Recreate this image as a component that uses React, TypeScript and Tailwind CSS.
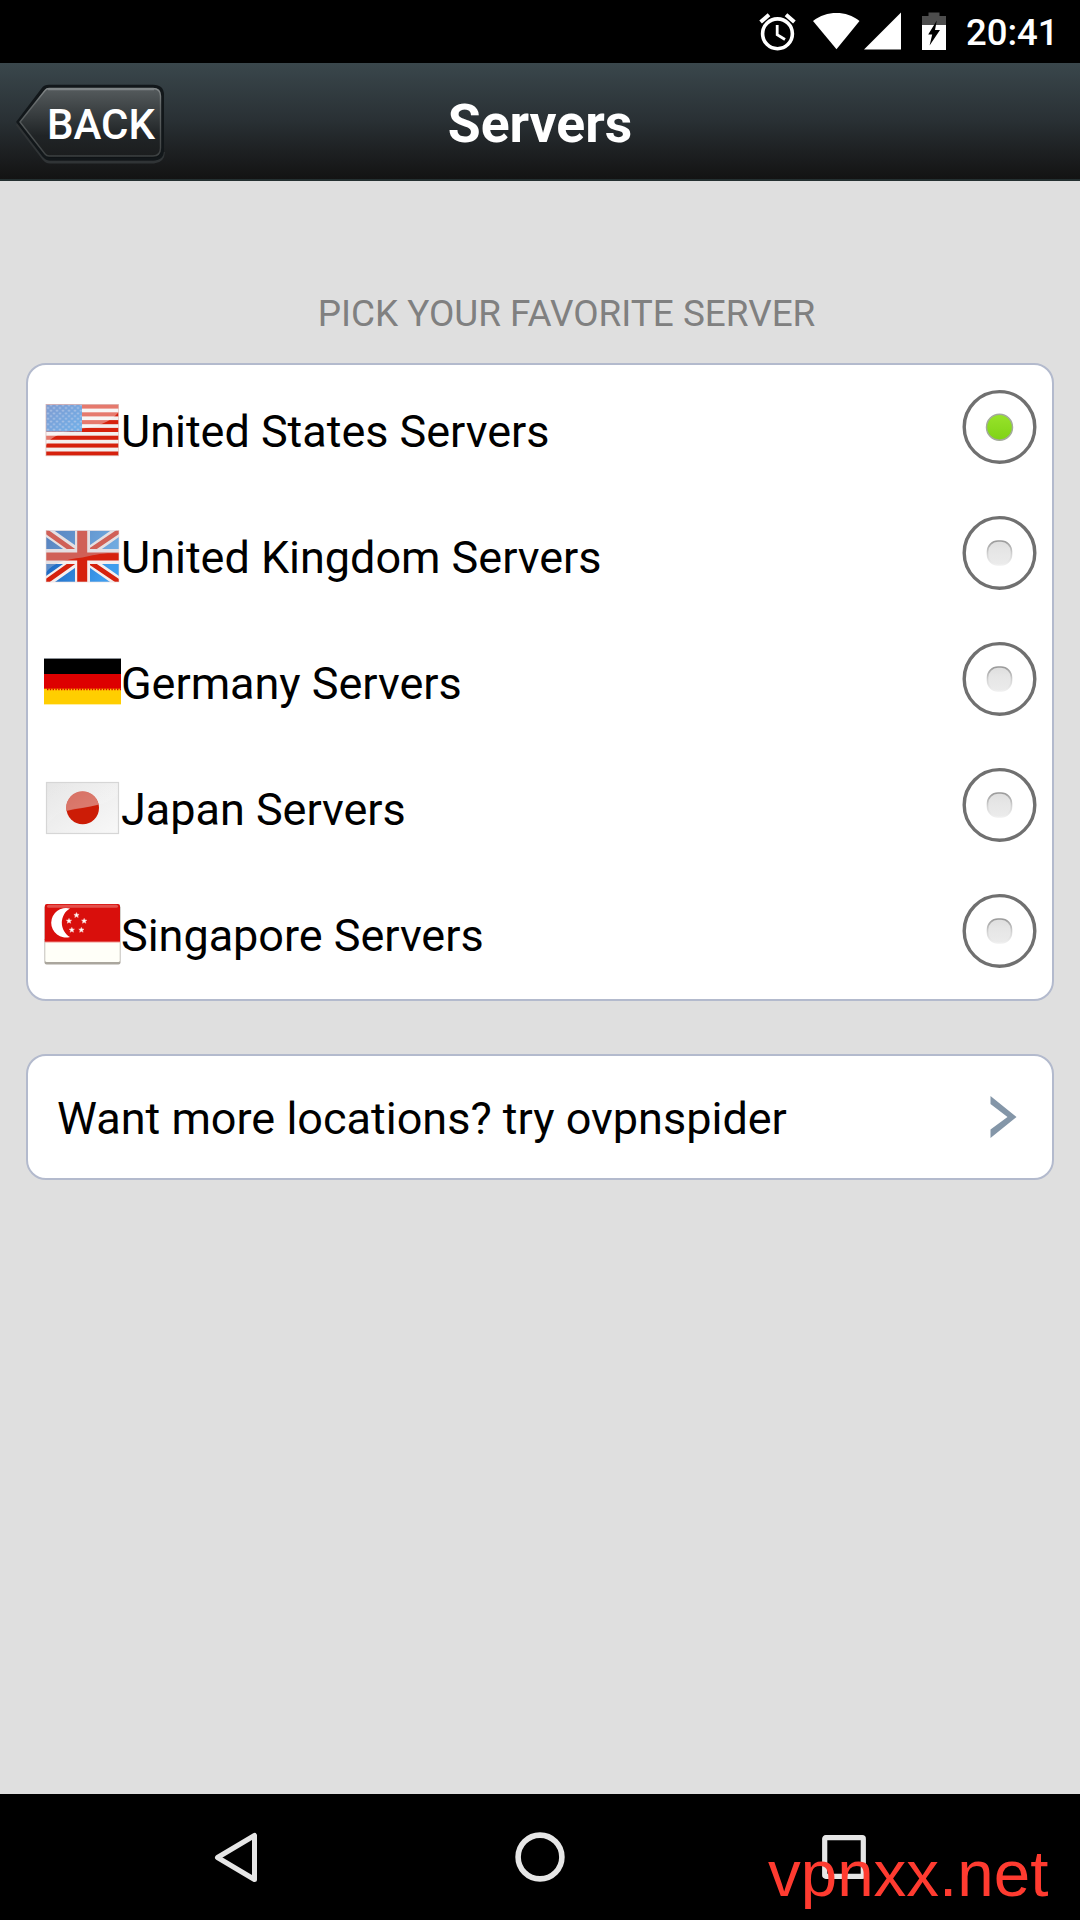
import { useState } from 'react';

type RadioProps = {
  checked?: boolean;
};

const UsFlag = () => (
  <svg className="h-[63px] w-[77px] shrink-0" viewBox="0.5 -0.5 77 63">
    <defs>
      <pattern id="stars" width="6" height="5.4" patternUnits="userSpaceOnUse">
        <circle cx="1.5" cy="1.4" r="1" fill="#b4c8e8" />
        <circle cx="4.5" cy="4.1" r="1" fill="#b4c8e8" />
      </pattern>
      <linearGradient id="canton" x1="0" y1="0" x2="1" y2="1">
        <stop offset="0" stopColor="#7f9bd0" />
        <stop offset="1" stopColor="#6fb0ea" />
      </linearGradient>
    </defs>
    <rect x="2" y="5.5" width="73.5" height="52" fill="#f3efee" />
    {[6, 13.8, 21.6, 29.4, 37.2, 45, 53].map((y) => (
      <rect key={y} x="2.5" y={y} width="72.5" height="4.1" fill="#d6210d" />
    ))}
    <path d="M2.5 6 H75 V14 C66 24 54 28 39 30 C22 33 12 36 5 43 L2.5 47 Z" fill="#fff" fillOpacity="0.4" />
    <rect x="2.5" y="6" width="36" height="27" fill="url(#canton)" />
    <rect x="2.5" y="6" width="36" height="27" fill="url(#stars)" />
    <rect x="2.5" y="6" width="72.5" height="51.2" fill="none" stroke="#dcb8b4" strokeOpacity="0.6" />
  </svg>
);

const UkFlag = () => (
  <svg className="h-[63px] w-[77px] shrink-0" viewBox="0.5 -0.5 77 63">
    <defs>
      <linearGradient id="ukblue" x1="0" y1="0" x2="1" y2="0.4">
        <stop offset="0" stopColor="#1458b4" />
        <stop offset="1" stopColor="#3e9dee" />
      </linearGradient>
      <clipPath id="ukclip">
        <rect x="2.5" y="6" width="73" height="51.5" />
      </clipPath>
    </defs>
    <g clipPath="url(#ukclip)">
      <rect x="2.5" y="6" width="73" height="51.5" fill="url(#ukblue)" />
      <path d="M2 6 L76 58 M76 6 L2 58" stroke="#f5eeee" strokeWidth="10" />
      <path d="M0 5 L38 32 M78 5 L38 32 M0 59 L38 32 M78 59 L38 32" stroke="#d6210d" strokeWidth="4.8" />
      <path d="M39 6 V58 M2 32 H76" stroke="#f5eeee" strokeWidth="15" />
      <path d="M38.7 6 V58" stroke="#d6210d" strokeWidth="10" />
      <path d="M2 32 H76" stroke="#d6210d" strokeWidth="8" />
      <path d="M2.5 6 H75.5 V29 C58 28 50 31 39 33 C22 35 10 38 2.5 48 Z" fill="#c8c8d0" fillOpacity="0.38" />
    </g>
    <rect x="2.5" y="6" width="73" height="51.5" fill="none" stroke="#e8dcdc" strokeOpacity="0.6" />
  </svg>
);

const GermanyFlag = () => (
  <svg className="h-[63px] w-[77px] shrink-0" viewBox="0 0 77 63">
    <rect y="8.5" width="77" height="16" fill="#000" />
    <rect y="8" width="77" height="1" fill="#8b9096" />
    <rect y="24" width="77" height="15" fill="#dd0000" />
    <rect y="38.7" width="77" height="15.5" fill="#ffce00" />
    <path d="M3 39.4 H77" stroke="#dd0000" strokeWidth="1.6" strokeDasharray="1.4 1.4" />
    <rect y="54" width="77" height="1" fill="#ffeea0" />
  </svg>
);

const JapanFlag = () => (
  <svg className="h-[63px] w-[77px] shrink-0" viewBox="0 -0.5 77 63">
    <defs>
      <linearGradient id="jpbg" x1="0" y1="0" x2="1" y2="1">
        <stop offset="0" stopColor="#e6e6e6" />
        <stop offset="1" stopColor="#f8f8f8" />
      </linearGradient>
      <linearGradient id="jpgloss" x1="0" y1="0" x2="1" y2="1">
        <stop offset="0" stopColor="#fff" stopOpacity="0" />
        <stop offset="1" stopColor="#fff" stopOpacity="0.5" />
      </linearGradient>
    </defs>
    <rect x="2.5" y="6" width="72" height="51" fill="url(#jpbg)" stroke="#d6d6d6" strokeWidth="1.2" />
    <circle cx="38.7" cy="31.5" r="16.3" fill="#cc1c06" />
    <path d="M22.4 34.5 A16.3 16.3 0 1 1 54.7 28 C44 31 33 32 22.4 34.5 Z" fill="#d66a5c" />
    <path d="M3 6.5 H74 V18 C64 28 52 29 39 31 C22 33 10 36 3 50 Z" fill="url(#jpgloss)" fillOpacity="0.4" />
  </svg>
);

const SingaporeFlag = () => (
  <svg className="h-[63px] w-[77px] shrink-0" viewBox="0 0 77 63">
    <rect x="0.5" y="3.5" width="76" height="59" rx="2" fill="#aaa69d" />
    <rect x="1.2" y="3" width="74.6" height="57" rx="1.5" fill="#fffff8" />
    <rect x="0.8" y="2" width="75.2" height="38" rx="2" fill="#d90f0c" />
    <rect x="0.8" y="37" width="75.2" height="3" fill="#d90f0c" />
    <rect x="0.8" y="39.6" width="75.2" height="1" fill="#f3a6a0" />
    <rect x="3" y="2.8" width="71" height="3" rx="1.5" fill="#e4514c" />
    <path d="M26 6.5 A14.8 14.8 0 1 0 26 35 A16.5 16.5 0 0 1 26 6.5 Z" fill="#fff" />
    {['32.5,13.2', '25,19', '40.2,19', '27.8,28', '37.4,28'].map((p) => (
      <g key={p} transform={`translate(${p})`}>
        <path
          d="M0 -2.6 L0.8 -0.9 L2.6 -0.8 L1.2 0.5 L1.7 2.2 L0 1.3 L-1.7 2.2 L-1.2 0.5 L-2.6 -0.8 L-0.8 -0.9 Z"
          fill="#fff"
          stroke="#f8c8c4"
          strokeWidth="0.6"
        />
      </g>
    ))}
  </svg>
);

const servers = [
  { code: 'us', name: 'United States Servers', flag: <UsFlag /> },
  { code: 'uk', name: 'United Kingdom Servers', flag: <UkFlag /> },
  { code: 'de', name: 'Germany Servers', flag: <GermanyFlag /> },
  { code: 'jp', name: 'Japan Servers', flag: <JapanFlag /> },
  { code: 'sg', name: 'Singapore Servers', flag: <SingaporeFlag /> },
];

const Radio = ({ checked = false }: RadioProps) => (
  <svg className="h-[75px] w-[75px] shrink-0" viewBox="0 0 75 75">
    <defs>
      <linearGradient id="radioOn" x1="0" y1="0" x2="0" y2="1">
        <stop offset="0" stopColor="#98e32b" />
        <stop offset="1" stopColor="#7fd316" />
      </linearGradient>
      <linearGradient id="radioOff" x1="0" y1="0" x2="0" y2="1">
        <stop offset="0" stopColor="#dedede" />
        <stop offset="0.4" stopColor="#e6e6e6" />
        <stop offset="1" stopColor="#ebebeb" />
      </linearGradient>
      <linearGradient id="radioOffRim" x1="0" y1="0" x2="0" y2="1">
        <stop offset="0" stopColor="#999" />
        <stop offset="0.6" stopColor="#d8d8d8" />
        <stop offset="1" stopColor="#f0f0f0" />
      </linearGradient>
    </defs>
    <circle cx="37.5" cy="37.9" r="35.3" fill="#fff" stroke="#707070" strokeWidth="3.4" />
    {checked ? (
      <circle cx="37.5" cy="38.2" r="13" fill="url(#radioOn)" stroke="#a3aa9c" strokeWidth="1.5" />
    ) : (
      <rect x="25.5" y="26" width="24" height="24" rx="10.5" fill="url(#radioOff)" stroke="url(#radioOffRim)" strokeWidth="1.6" />
    )}
  </svg>
);

const StatusBar = () => (
  <div className="flex h-[63px] items-start justify-end bg-black pr-[26px] text-white">
    <svg className="mt-3 h-[40px] w-[37px]" viewBox="0 0 37 40">
      <circle cx="18.5" cy="21.8" r="14.9" fill="none" stroke="#fff" strokeWidth="3.6" />
      <path d="M18.2 13 V22.8 L26 27.5" fill="none" stroke="#fff" strokeWidth="2.8" />
      <path d="M1.6 10 L10 2.8 M35.4 10 L27 2.8" stroke="#fff" strokeWidth="4" />
    </svg>
    <svg className="mt-3 ml-[17px] h-[38px] w-[47px]" viewBox="0 0 47 38">
      <path d="M0 9 C7 3.5 15 1 23.5 1 C32 1 39.5 3.5 46.5 9 L23.5 37.3 Z" fill="#fff" />
    </svg>
    <svg className="mt-3 ml-1 h-[38px] w-[37px]" viewBox="0 0 37 38">
      <path d="M0 37.5 H37 V0.5 Z" fill="#fff" />
    </svg>
    <svg className="mt-3 ml-[21px] h-[38px] w-[24px]" viewBox="0 0 24 38">
      <path d="M0 13 V4 H6.5 V0.5 H17.5 V4 H24 V13 Z" fill="#4d4d4d" />
      <path d="M0 13 H24 V38 H0 Z" fill="#fff" />
      <path d="M14.8 8.5 L6.2 22.5 H10.2 L7.6 33.5 L18 18 H13 Z" fill="#000" />
    </svg>
    <span className="ml-5 w-[88px] text-[36.5px] leading-[66px] font-medium whitespace-nowrap">20:41</span>
  </div>
);

const BackButton = () => (
  <button className="relative flex h-[86px] w-[152px] items-center pt-[7px] pl-[33px] text-left">
    <svg className="absolute top-px left-0 h-[86px] w-[152px]" viewBox="0 0 152 86">
      <defs>
        <linearGradient id="backFill" x1="0" y1="0" x2="0" y2="1">
          <stop offset="0" stopColor="#555b5d" />
          <stop offset="0.45" stopColor="#33383a" />
          <stop offset="0.7" stopColor="#202426" />
          <stop offset="1" stopColor="#1b1d1e" />
        </linearGradient>
        <linearGradient id="backEdge" x1="0" y1="0" x2="0" y2="1">
          <stop offset="0" stopColor="#858a8b" />
          <stop offset="0.25" stopColor="#626768" />
          <stop offset="1" stopColor="#3c4041" />
        </linearGradient>
      </defs>
      <path
        d="M3 45 L30 80 Q32 83 36 83 H140 Q149 82.5 149.5 73"
        fill="none"
        stroke="#303436"
        strokeWidth="3"
      />
      <path
        d="M4 43 L29 10 Q31 7.3 35 7.3 H139 Q148.5 7.3 148.5 16 V71 Q148.5 80 139 80 H36 Q32 80 30 77 Z"
        fill="#0d1112"
        stroke="#12171a"
        strokeWidth="3"
      />
      <path
        d="M6 43 L31 11.5 Q32.5 9.5 35 9.5 H139 Q146.5 9.5 146.5 17 V69 Q146.5 77 139 77 H35 Q32.5 77 31 75 Z"
        fill="url(#backFill)"
        stroke="url(#backEdge)"
        strokeWidth="1.4"
      />
      <path d="M34 10.3 H140" stroke="#7f8486" strokeWidth="2" />
    </svg>
    <span className="relative text-[42px] leading-none font-medium text-white">BACK</span>
  </button>
);

const Header = () => (
  <div className="grid h-[118px] grid-cols-[1fr_auto_1fr] items-center border-b-2 border-[#243031] bg-linear-to-b from-[#3a474c] via-[#293034] via-50% to-[#131313] pl-[14px]">
    <BackButton />
    <h1 className="-ml-[14px] pt-[5px] text-[53.5px] leading-none font-bold text-white">Servers</h1>
    <span />
  </div>
);

const NavBar = () => (
  <div className="relative flex h-[126px] items-center bg-black pl-[212px]">
    <svg className="h-[52px] w-[48px]" viewBox="0 0 48 52">
      <path d="M5.5 26.5 L42.5 4.5 V48.5 Z" fill="none" stroke="#e6e6e6" strokeWidth="5" strokeLinejoin="round" />
    </svg>
    <svg className="ml-[254px] h-[52px] w-[52px]" viewBox="0 0 52 52">
      <circle cx="26" cy="26" r="21.9" fill="none" stroke="#e6e6e6" strokeWidth="5.6" />
    </svg>
    <svg className="ml-[254px] h-[52px] w-[48px]" viewBox="0 0 48 52">
      <rect x="4.7" y="6.7" width="38.6" height="38.6" rx="1" fill="none" stroke="#e6e6e6" strokeWidth="5.2" />
    </svg>
    <span className="absolute top-[43px] left-[768px] font-['Liberation_Sans',Arial,sans-serif] text-[65.5px] leading-[74px] text-[#ff3b30]">
      vpnxx.net
    </span>
  </div>
);

const App = () => {
  const [selected, setSelected] = useState('us');

  return (
    <div className="flex h-[1920px] w-[1080px] flex-col overflow-hidden bg-[#dfdfdf] font-[Roboto,sans-serif]">
      <StatusBar />
      <Header />
      <main className="flex-1 px-[26px] pt-[109px]">
        <h2 className="mb-[25px] pl-[53px] text-center text-[36.9px] leading-[48px] text-[#808080]">
          PICK YOUR FAVORITE SERVER
        </h2>
        <ul className="flex flex-col gap-1 rounded-[20px] border-2 border-[#b3bacd] bg-white pr-[15px] pb-2 pl-4">
          {servers.map((server) => (
            <li key={server.code} className="flex h-[122px] cursor-pointer items-center" onClick={() => setSelected(server.code)}>
              <div className="pt-[7px]">{server.flag}</div>
              <span className="flex-1 pt-[10px] text-[45px] leading-none tracking-[-0.03px] text-black">{server.name}</span>
              <Radio checked={selected === server.code} />
            </li>
          ))}
        </ul>
        <div className="mt-[53px] flex h-[126px] items-center justify-between rounded-[20px] border-2 border-[#b3bacd] bg-white pr-[35px] pl-[29px]">
          <span className="pt-[3px] text-[45px] leading-none text-black">Want more locations? try ovpnspider</span>
          <svg className="h-[42px] w-[27px]" viewBox="0 0 27 42">
            <path d="M0.5 0 L26.5 21 L0.5 42 V33.5 L17.5 21 L0.5 8 Z" fill="#8496a8" />
          </svg>
        </div>
      </main>
      <NavBar />
    </div>
  );
};

export default App;
